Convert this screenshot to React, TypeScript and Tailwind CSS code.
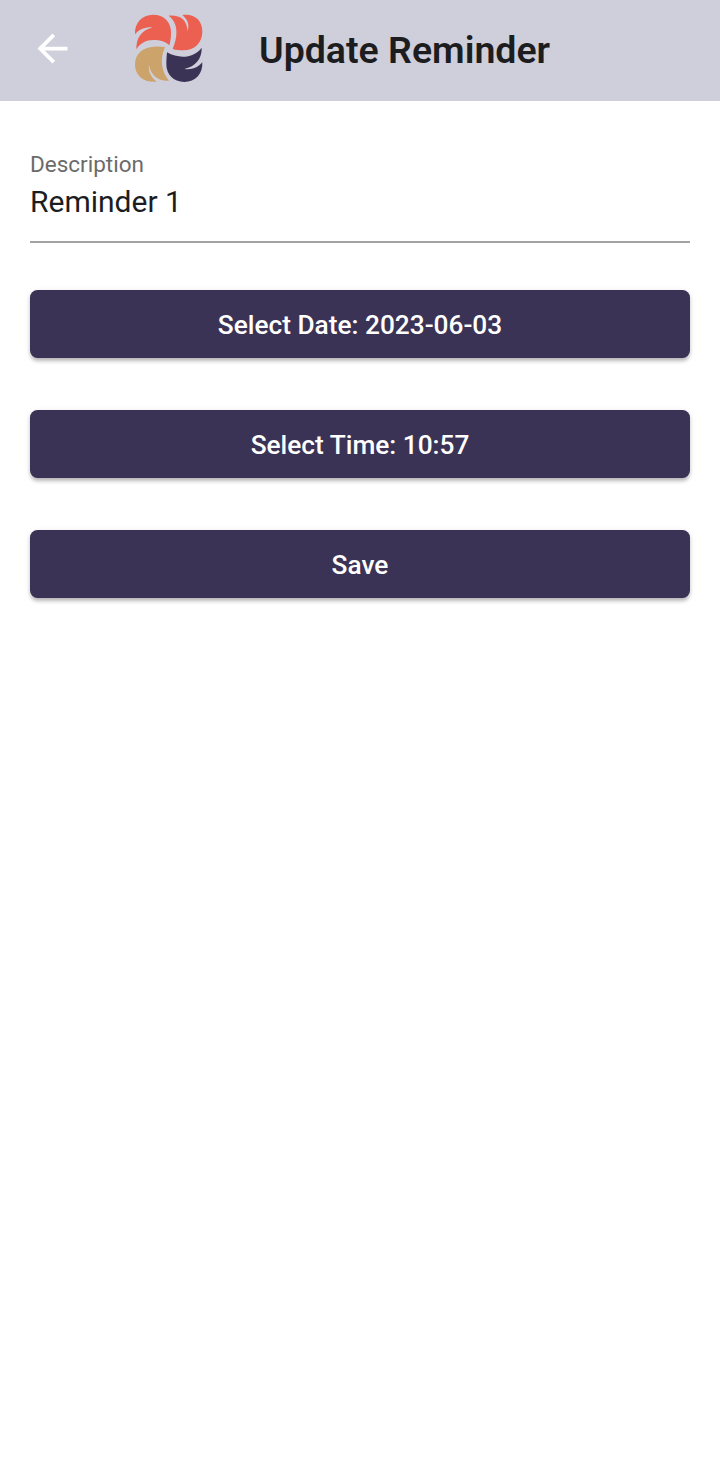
import React from "react";

function BackArrow() {
  return (
    <svg viewBox="0 0 24 24" className="size-[45px] shrink-0" fill="#ffffff" aria-hidden="true">
      <path d="M20 11H7.83l5.59-5.59L12 4l-8 8 8 8 1.41-1.41L7.83 13H20v-2z" />
    </svg>
  );
}

function Logo() {
  return (
    <svg viewBox="0 0 270 270" className="size-[90px] shrink-0" aria-hidden="true">
      <path
        fill="#ec6052"
        d="M30 88C28 54 51 29 84 29C117 29 138 51 138 81C138 96 137 108 133 121C122 110 107 105 85 105C63 105 45 115 34 133C34 96 50 77 83 67C60 66 41 74 30 88Z"
      />
      <path
        fill="#ec6052"
        d="M131 32C168 30 185 44 188 79C194 58 188 43 172 30C209 25 232 46 232 80C232 113 208 136 176 136C163 136 153 135 143 132C158 96 162 55 131 32Z"
      />
      <path
        fill="#cca46b"
        d="M120 126C105 160 107 196 132 227C101 229 78 213 72 180C69 199 79 218 95 230C58 234 30 212 30 179C30 146 54 126 87 125C100 124 110 125 120 126Z"
      />
      <path
        fill="#3b3355"
        d="M126 142C163 163 207 159 230 128C231 161 212 184 178 192C199 195 219 188 232 172C234 207 211 231 178 231C145 231 124 208 124 178C124 162 125 153 126 142Z"
      />
    </svg>
  );
}

function ActionButton({ children }: { children: React.ReactNode }) {
  return (
    <button className="flex h-[67.5px] w-full items-center justify-center rounded-[7.5px] bg-[#3b3355] pt-[2px] text-[26.25px] leading-none font-medium text-white shadow-[0_4px_4px_-2px_rgba(0,0,0,0.18),0_3px_4px_rgba(0,0,0,0.13),0_1px_7px_rgba(0,0,0,0.08)]">
      {children}
    </button>
  );
}

export default function App() {
  return (
    <div className="min-h-[1457px] w-full bg-white font-['Roboto',sans-serif] text-[#1d1d1f]">
      <header className="flex h-[101px] items-start bg-[#cfcedb]">
        <div className="pt-[26px] pl-[30px]">
          <BackArrow />
        </div>
        <div className="pt-[5px] pl-[50px]">
          <Logo />
        </div>
        <h1 className="pt-[28px] pl-[44px] text-[37.5px] leading-[44px] font-semibold whitespace-nowrap">
          Update Reminder
        </h1>
      </header>
      <main className="px-[30px] pt-[50px]">
        <label className="flex flex-col border-b-2 border-[#a3a3a3] pb-[20.6px]">
          <span className="text-[22.5px] leading-[27px] text-[#6b6b6b]">Description</span>
          <span className="mt-[6px] text-[30px] leading-[36px]">Reminder 1</span>
        </label>
        <div className="mt-[47.9px] flex flex-col gap-[52.5px]">
          <ActionButton>Select Date: 2023-06-03</ActionButton>
          <ActionButton>Select Time: 10:57</ActionButton>
          <ActionButton>Save</ActionButton>
        </div>
      </main>
    </div>
  );
}
